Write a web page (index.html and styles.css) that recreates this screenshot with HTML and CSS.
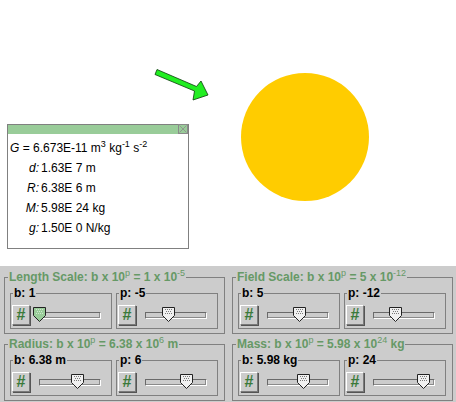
FILE: index.html
```html
<!DOCTYPE html>
<html>
<head>
<meta charset="utf-8">
<link rel="stylesheet" href="styles.css">
</head>
<body>
<div class="canvas">
  <svg class="arrow" width="60" height="40" viewBox="150 65 60 40">
    <polygon points="157,69.5 196.5,86.5 201,81 208,95 193,100 194.5,91 155,74.5" fill="#22ee22" stroke="#0b3b0b" stroke-width="0.8" stroke-linejoin="miter"/>
  </svg>
  <div class="planet"></div>
  <div class="info">
    <div class="info-head">
      <svg class="close" width="10" height="10" viewBox="0 0 10 10">
        <rect x="0.5" y="0.5" width="9" height="9" fill="none" stroke="#8a8a8a"/>
        <path d="M1.5 1.5 L8.5 8.5 M8.5 1.5 L1.5 8.5" stroke="#8a8a8a" stroke-width="0.8"/>
      </svg>
    </div>
    <div class="info-body">
      <div class="gline"><i>G</i> = 6.673E-11 m<sup>3</sup> kg<sup>-1</sup> s<sup>-2</sup></div>
      <div class="row"><span class="lbl">d:</span><span>1.63E 7 m</span></div>
      <div class="row"><span class="lbl">R:</span><span>6.38E 6 m</span></div>
      <div class="row"><span class="lbl">M:</span><span>5.98E 24 kg</span></div>
      <div class="row"><span class="lbl">g:</span><span>1.50E 0 N/kg</span></div>
    </div>
  </div>
</div>
<div class="controls">
  <fieldset class="group">
    <legend>Length Scale: b x 10<sup>p</sup> = 1 x 10<sup>-5</sup></legend>
    <fieldset class="sub">
      <legend>b: 1</legend>
      <div class="ctl"><button class="hash">#</button><div class="track"><svg class="thumb sel" style="left:-7px" width="13" height="15" viewBox="0 0 13 15"><path d="M0.5 0.5H12.5V8.5L6.5 14.5L0.5 8.5Z"/><g class="dots"><rect x="3" y="2" width="1" height="1"/><rect x="5" y="2" width="1" height="1"/><rect x="7" y="2" width="1" height="1"/><rect x="9" y="2" width="1" height="1"/><rect x="4" y="4" width="1" height="1"/><rect x="6" y="4" width="1" height="1"/><rect x="8" y="4" width="1" height="1"/><rect x="3" y="6" width="1" height="1"/><rect x="5" y="6" width="1" height="1"/><rect x="7" y="6" width="1" height="1"/><rect x="9" y="6" width="1" height="1"/></g></svg></div></div>
    </fieldset>
    <fieldset class="sub">
      <legend>p: -5</legend>
      <div class="ctl"><button class="hash">#</button><div class="track"><svg class="thumb" style="left:16px" width="13" height="15" viewBox="0 0 13 15"><path d="M0.5 0.5H12.5V8.5L6.5 14.5L0.5 8.5Z"/><g class="dots"><rect x="3" y="2" width="1" height="1"/><rect x="5" y="2" width="1" height="1"/><rect x="7" y="2" width="1" height="1"/><rect x="9" y="2" width="1" height="1"/><rect x="4" y="4" width="1" height="1"/><rect x="6" y="4" width="1" height="1"/><rect x="8" y="4" width="1" height="1"/><rect x="3" y="6" width="1" height="1"/><rect x="5" y="6" width="1" height="1"/><rect x="7" y="6" width="1" height="1"/><rect x="9" y="6" width="1" height="1"/></g></svg></div></div>
    </fieldset>
  </fieldset>
  <fieldset class="group">
    <legend>Field Scale: b x 10<sup>p</sup> = 5 x 10<sup>-12</sup></legend>
    <fieldset class="sub">
      <legend>b: 5</legend>
      <div class="ctl"><button class="hash">#</button><div class="track"><svg class="thumb" style="left:25px" width="13" height="15" viewBox="0 0 13 15"><path d="M0.5 0.5H12.5V8.5L6.5 14.5L0.5 8.5Z"/><g class="dots"><rect x="3" y="2" width="1" height="1"/><rect x="5" y="2" width="1" height="1"/><rect x="7" y="2" width="1" height="1"/><rect x="9" y="2" width="1" height="1"/><rect x="4" y="4" width="1" height="1"/><rect x="6" y="4" width="1" height="1"/><rect x="8" y="4" width="1" height="1"/><rect x="3" y="6" width="1" height="1"/><rect x="5" y="6" width="1" height="1"/><rect x="7" y="6" width="1" height="1"/><rect x="9" y="6" width="1" height="1"/></g></svg></div></div>
    </fieldset>
    <fieldset class="sub">
      <legend>p: -12</legend>
      <div class="ctl"><button class="hash">#</button><div class="track"><svg class="thumb" style="left:15px" width="13" height="15" viewBox="0 0 13 15"><path d="M0.5 0.5H12.5V8.5L6.5 14.5L0.5 8.5Z"/><g class="dots"><rect x="3" y="2" width="1" height="1"/><rect x="5" y="2" width="1" height="1"/><rect x="7" y="2" width="1" height="1"/><rect x="9" y="2" width="1" height="1"/><rect x="4" y="4" width="1" height="1"/><rect x="6" y="4" width="1" height="1"/><rect x="8" y="4" width="1" height="1"/><rect x="3" y="6" width="1" height="1"/><rect x="5" y="6" width="1" height="1"/><rect x="7" y="6" width="1" height="1"/><rect x="9" y="6" width="1" height="1"/></g></svg></div></div>
    </fieldset>
  </fieldset>
  <fieldset class="group">
    <legend>Radius: b x 10<sup>p</sup> = 6.38 x 10<sup>6</sup> m</legend>
    <fieldset class="sub">
      <legend>b: 6.38 m</legend>
      <div class="ctl"><button class="hash">#</button><div class="track"><svg class="thumb" style="left:31px" width="13" height="15" viewBox="0 0 13 15"><path d="M0.5 0.5H12.5V8.5L6.5 14.5L0.5 8.5Z"/><g class="dots"><rect x="3" y="2" width="1" height="1"/><rect x="5" y="2" width="1" height="1"/><rect x="7" y="2" width="1" height="1"/><rect x="9" y="2" width="1" height="1"/><rect x="4" y="4" width="1" height="1"/><rect x="6" y="4" width="1" height="1"/><rect x="8" y="4" width="1" height="1"/><rect x="3" y="6" width="1" height="1"/><rect x="5" y="6" width="1" height="1"/><rect x="7" y="6" width="1" height="1"/><rect x="9" y="6" width="1" height="1"/></g></svg></div></div>
    </fieldset>
    <fieldset class="sub">
      <legend>p: 6</legend>
      <div class="ctl"><button class="hash">#</button><div class="track"><svg class="thumb" style="left:34px" width="13" height="15" viewBox="0 0 13 15"><path d="M0.5 0.5H12.5V8.5L6.5 14.5L0.5 8.5Z"/><g class="dots"><rect x="3" y="2" width="1" height="1"/><rect x="5" y="2" width="1" height="1"/><rect x="7" y="2" width="1" height="1"/><rect x="9" y="2" width="1" height="1"/><rect x="4" y="4" width="1" height="1"/><rect x="6" y="4" width="1" height="1"/><rect x="8" y="4" width="1" height="1"/><rect x="3" y="6" width="1" height="1"/><rect x="5" y="6" width="1" height="1"/><rect x="7" y="6" width="1" height="1"/><rect x="9" y="6" width="1" height="1"/></g></svg></div></div>
    </fieldset>
  </fieldset>
  <fieldset class="group">
    <legend>Mass: b x 10<sup>p</sup> = 5.98 x 10<sup>24</sup> kg</legend>
    <fieldset class="sub">
      <legend>b: 5.98 kg</legend>
      <div class="ctl"><button class="hash">#</button><div class="track"><svg class="thumb" style="left:29px" width="13" height="15" viewBox="0 0 13 15"><path d="M0.5 0.5H12.5V8.5L6.5 14.5L0.5 8.5Z"/><g class="dots"><rect x="3" y="2" width="1" height="1"/><rect x="5" y="2" width="1" height="1"/><rect x="7" y="2" width="1" height="1"/><rect x="9" y="2" width="1" height="1"/><rect x="4" y="4" width="1" height="1"/><rect x="6" y="4" width="1" height="1"/><rect x="8" y="4" width="1" height="1"/><rect x="3" y="6" width="1" height="1"/><rect x="5" y="6" width="1" height="1"/><rect x="7" y="6" width="1" height="1"/><rect x="9" y="6" width="1" height="1"/></g></svg></div></div>
    </fieldset>
    <fieldset class="sub">
      <legend>p: 24</legend>
      <div class="ctl"><button class="hash">#</button><div class="track"><svg class="thumb" style="left:43px" width="13" height="15" viewBox="0 0 13 15"><path d="M0.5 0.5H12.5V8.5L6.5 14.5L0.5 8.5Z"/><g class="dots"><rect x="3" y="2" width="1" height="1"/><rect x="5" y="2" width="1" height="1"/><rect x="7" y="2" width="1" height="1"/><rect x="9" y="2" width="1" height="1"/><rect x="4" y="4" width="1" height="1"/><rect x="6" y="4" width="1" height="1"/><rect x="8" y="4" width="1" height="1"/><rect x="3" y="6" width="1" height="1"/><rect x="5" y="6" width="1" height="1"/><rect x="7" y="6" width="1" height="1"/><rect x="9" y="6" width="1" height="1"/></g></svg></div></div>
    </fieldset>
  </fieldset>
</div>
</body>
</html>
```
FILE: styles.css
```css
html, body {
  margin: 0;
  padding: 0;
  background: #ffffff;
  font-family: "Liberation Sans", Arial, sans-serif;
}

.canvas {
  position: relative;
  height: 266px;
  background: #ffffff;
}

.arrow {
  position: absolute;
  left: 150px;
  top: 65px;
}

.planet {
  position: absolute;
  left: 241px;
  top: 73px;
  width: 128px;
  height: 128px;
  border-radius: 50%;
  background: #ffcc00;
}

.info {
  position: absolute;
  left: 7px;
  top: 124px;
  width: 180px;
  height: 123px;
  border: 1px solid #808080;
  background: #ffffff;
}

.info-head {
  height: 9px;
  background: #99cc99;
  display: flex;
  justify-content: flex-end;
  align-items: flex-start;
}

.close {
  display: block;
  margin-top: -1px;
}

.info-body {
  padding-top: 4px;
  font-size: 12px;
  line-height: 20px;
  color: #000;
}

.gline {
  padding-left: 2px;
}

.info sup {
  font-size: 9px;
  line-height: 0;
  vertical-align: 5px;
}

.row {
  display: grid;
  grid-template-columns: 31px auto;
  column-gap: 2px;
}

.lbl {
  text-align: right;
  font-style: italic;
}

.controls {
  background: #cccccc;
  height: 136px;
  box-sizing: border-box;
  padding: 4px 3px 0 4px;
  display: grid;
  grid-template-columns: 221px 221px;
  column-gap: 7px;
  row-gap: 3px;
  align-content: start;
}

fieldset {
  margin: 0;
  min-width: 0;
}

legend {
  font-size: 12px;
  font-weight: bold;
  line-height: 14px;
  white-space: nowrap;
}

legend sup {
  font-size: 9px;
  font-weight: normal;
  line-height: 0;
  vertical-align: 5px;
}

.group {
  border: 1px solid #808080;
  padding: 0 6px 4px 5px;
  display: grid;
  grid-template-columns: 102px 102px;
  column-gap: 4px;
}

.group > legend {
  color: #669966;
  margin-left: -2px;
  padding: 0 1px;
}

.sub {
  border: 1px solid #808080;
  margin-top: 2px;
  padding: 5px 10px 3px 1px;
}

.sub > legend {
  color: #000;
  margin-left: 1px;
  padding: 0 1px;
}

.ctl {
  display: flex;
  align-items: center;
  height: 20px;
}

.hash {
  box-sizing: border-box;
  width: 18px;
  height: 20px;
  padding: 0;
  margin: 0;
  background: #cccccc;
  border-top: 1px solid #ffffff;
  border-left: 1px solid #ffffff;
  border-right: 1px solid #7a7a7a;
  border-bottom: 1px solid #7a7a7a;
  box-shadow: 1px 1px 0 #555555;
  color: #3a7a3a;
  font-family: "Liberation Sans", Arial, sans-serif;
  font-size: 16px;
  font-weight: bold;
  line-height: 18px;
  text-align: center;
}

.track {
  position: relative;
  flex: 1;
  margin-left: 9px;
  height: 7px;
  box-sizing: border-box;
  background: #cccccc;
  border-top: 1px solid #6a6a6a;
  border-left: 1px solid #6a6a6a;
  border-bottom: 1px solid #ffffff;
  border-right: 1px solid #ffffff;
  box-shadow: inset -1px -1px 0 #8a8a8a;
}

.thumb {
  position: absolute;
  top: -6px;
  display: block;
}

.thumb path {
  fill: #f0f0f0;
  stroke: #222222;
  stroke-width: 1;
}

.thumb .dots rect {
  fill: #7a7a7a;
}

.thumb.sel path {
  fill: #99cc99;
}

.thumb.sel .dots rect {
  fill: #cfe8cf;
}
```
